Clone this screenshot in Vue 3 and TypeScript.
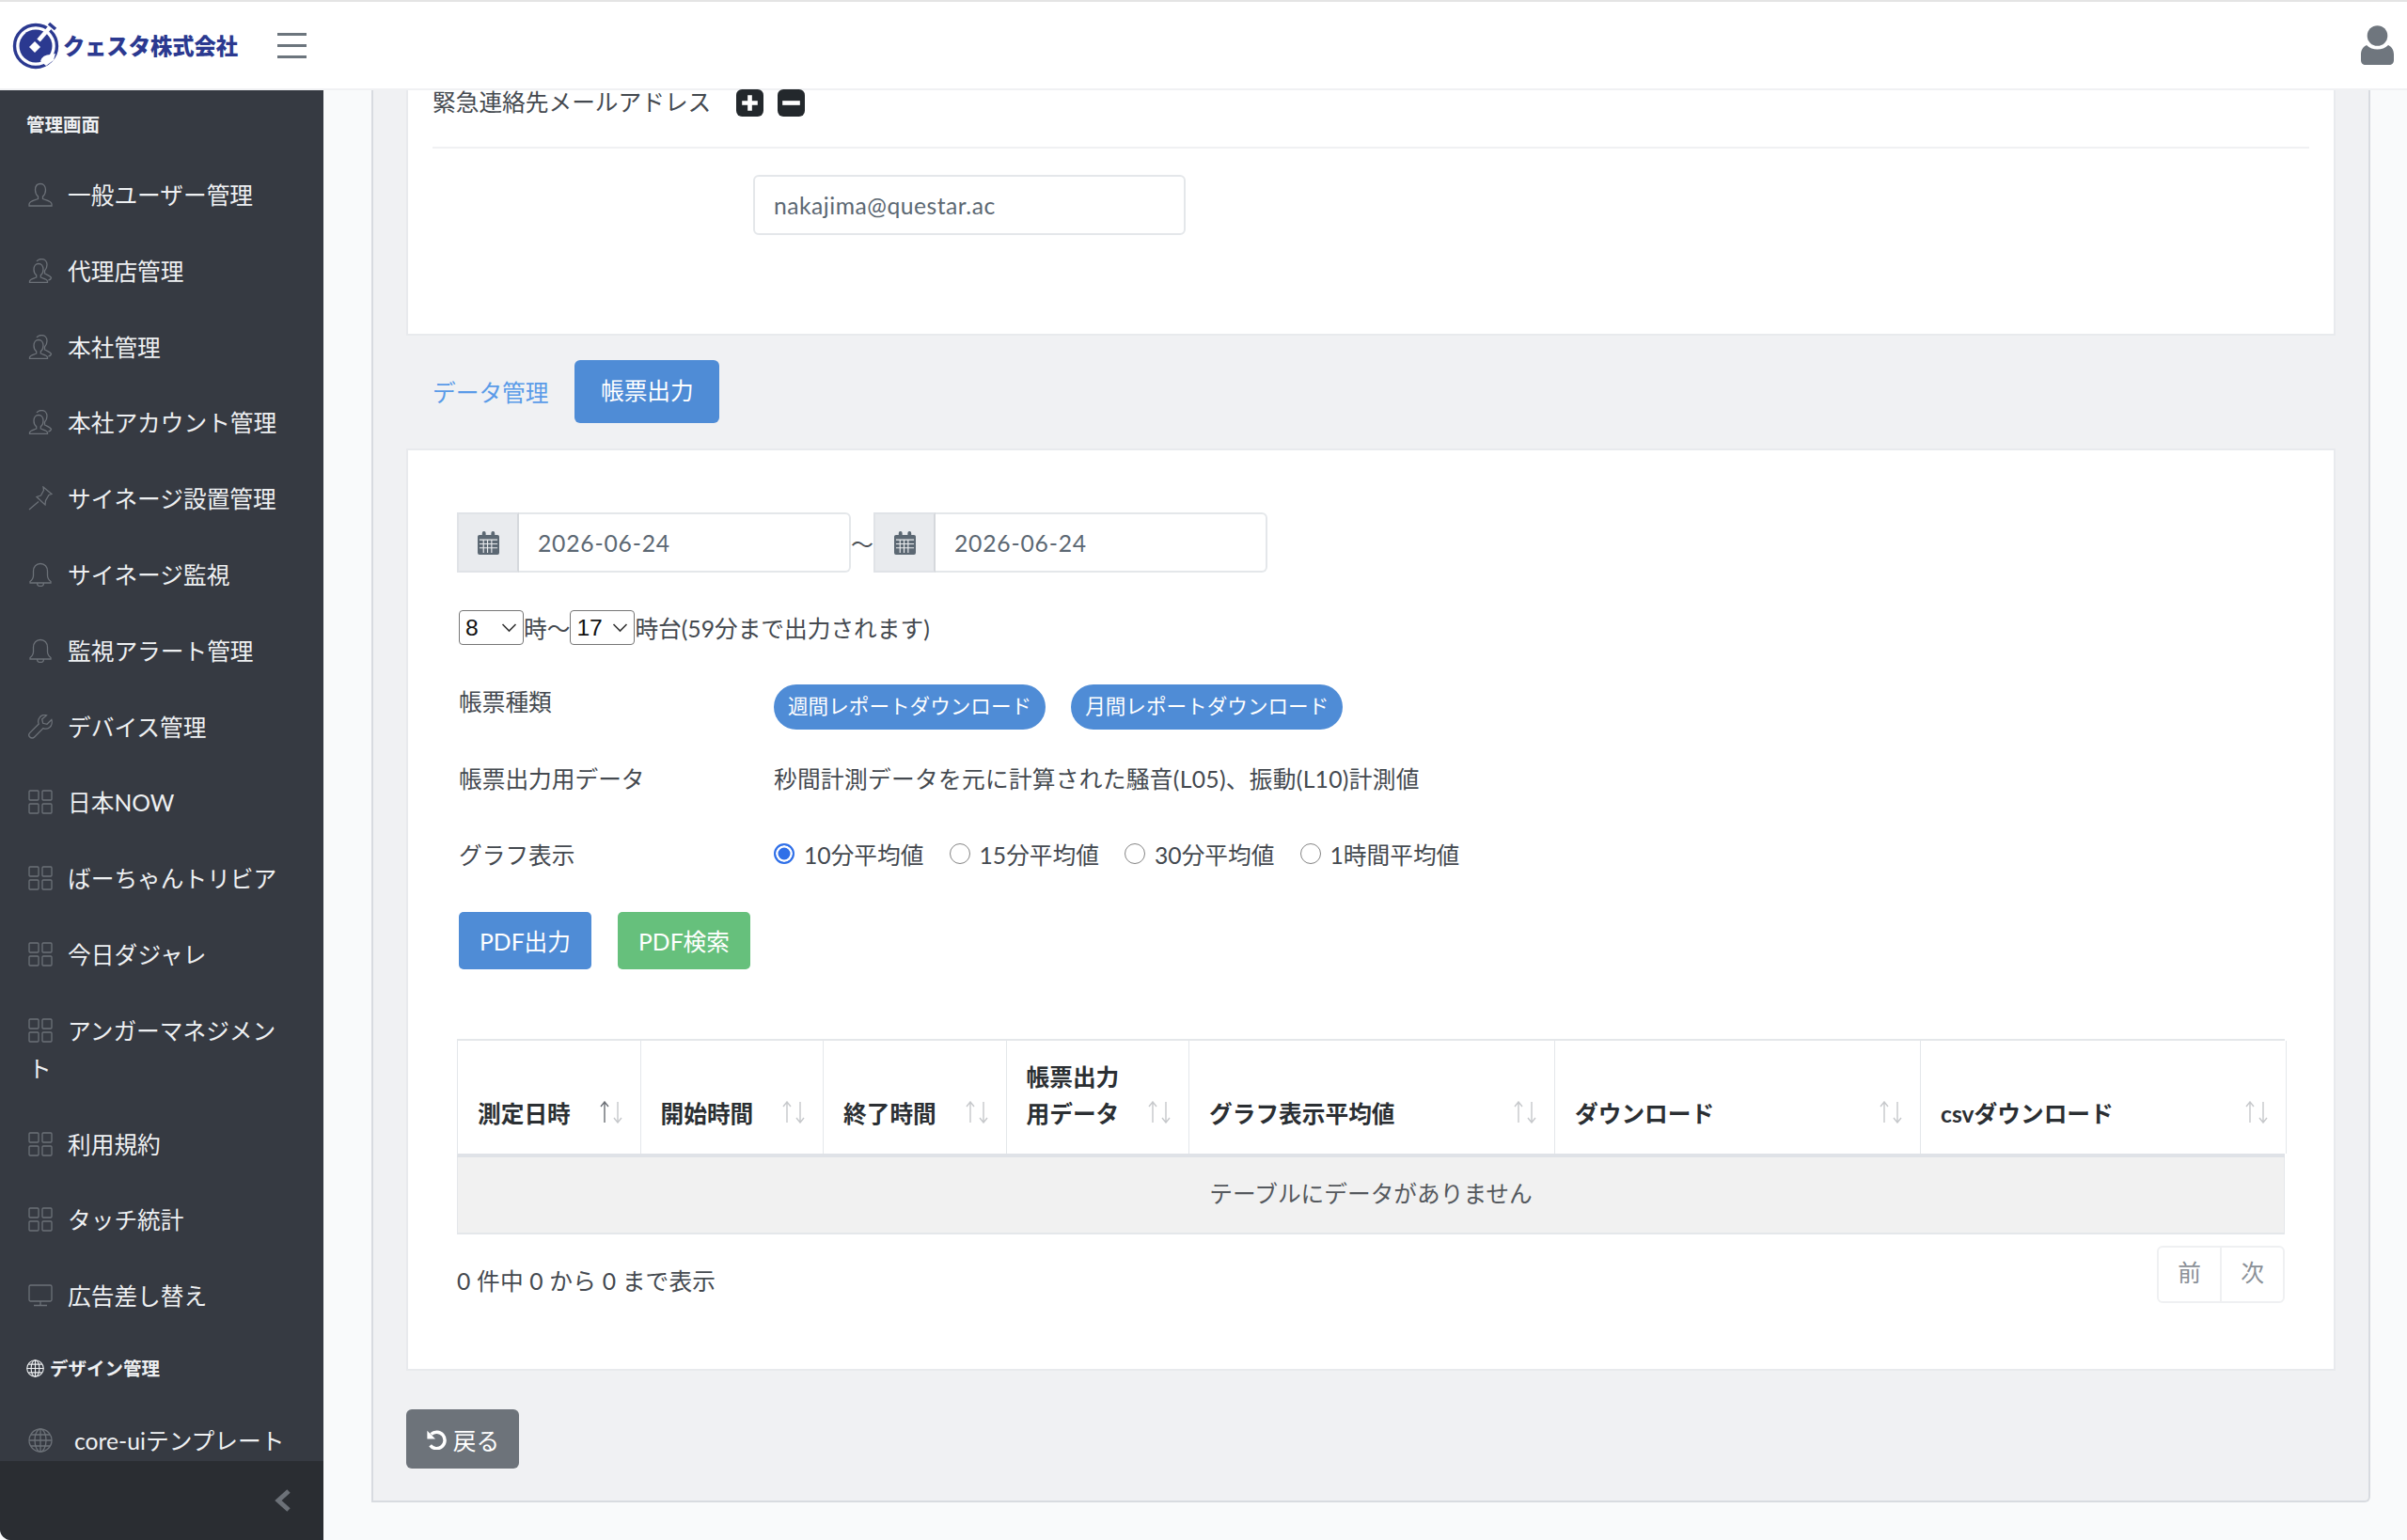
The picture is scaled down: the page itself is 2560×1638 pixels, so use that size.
<template>
  <div class="page">
    <header class="topbar">
      <div class="brand">
        <svg class="brand-mark" viewBox="0 0 50 52">
          <circle cx="25" cy="27" r="22.500" fill="#fff" stroke="#2b3990" stroke-width="3.400" />
          <circle cx="25" cy="27" r="17.500" fill="#2b3990" />
          <path d="M41 6 28 21" stroke="#fff" stroke-width="4.500" />
          <path d="m24 22 6 6-6 6-6-6z" fill="#fff" />
          <path d="M30 43q2-7 11-7l5-1-2 7-8 6z" fill="#fff" />
          <path d="m39 3 7 6" stroke="#2b3990" stroke-width="3.600" />
        </svg>
        <span class="brand-name">クェスタ株式会社</span>
      </div>
      <button class="burger" type="button" aria-label="menu"><i></i><i></i><i></i></button>
      <svg class="user-icon" viewBox="0 0 35 42">
        <circle cx="17.5" cy="11" r="10.8" fill="#6f767e" />
        <path d="M6 21c3 3 7 4.500 11.500 4.500S26 24 29 21c3.500 1.500 6 5 6 10v6c0 3-2 5-5 5H5c-3 0-5-2-5-5v-6c0-5 2.500-8.500 6-10z" fill="#6f767e" />
      </svg>
    </header>

    <div class="body-row">
      <aside class="sidebar">
        <nav class="side-nav">
          <div class="nav-title">管理画面</div>
          <a v-for="item in navItems" :key="item.label" class="nav-link">
            <svg class="nav-icon" viewBox="0 0 26 26" fill="none" stroke="currentColor" stroke-width="1.300">
              <template v-if="item.icon === 'user'">
                <path d="M13 1.500c-3.500 0-5.500 2.800-5.500 6.500 0 3 1.200 5.500 3 7v2.500c-3 1.500-9 2-9.500 5.500v2h24v-2c-.5-3.500-6.500-4-9.500-5.500V15c1.800-1.500 3-4 3-7 0-3.700-2-6.500-5.500-6.500z" />
              </template>
              <template v-else-if="item.icon === 'users'">
                <path d="M11 5.500c-3 0-5 2.500-5 6 0 2.700 1 5 2.700 6.300v2.200C6.500 21 2 21.500 1.500 24v1.500h19V24c-.5-2.500-5-3-7.200-4v-2.200c1.700-1.300 2.700-3.600 2.700-6.300 0-3.500-2-6-5-6z" />
                <path d="M9 3c1-1.500 3-2.500 5-2.500 3.500 0 6 2.500 6 6 0 3-1 5-2.500 6.500V16c2.500 1.200 6 2 7 4.500-.3 1.500-1.300 2.200-3 2.500" />
              </template>
              <template v-else-if="item.icon === 'pin'">
                <path d="M16 1l9 7.500-3 1-3.500 6-.5 4.500-9-8.500 4.500-1.500 3-5.500zM11 16.500 1 25" />
              </template>
              <template v-else-if="item.icon === 'bell'">
                <path d="M13 1.500c-4.500 0-7.500 3.500-7.500 8v4.500c0 2.500-1.500 5-3.500 6.500v1.500h22v-1.500c-2-1.500-3.500-4-3.500-6.500V9.500c0-4.500-3-8-7.500-8zM9.500 22c0 2 1.500 3.500 3.500 3.500s3.500-1.500 3.500-3.500" />
              </template>
              <template v-else-if="item.icon === 'wrench'">
                <path d="M24.800 5.500 20 10.300l-4.300-1-1-4.300L19.500.8c-3-.8-6 .2-7.500 2.500-1.500 2-1.700 4.500-.8 6.700L1.800 19.400c-1.300 1.300-1.300 3.300 0 4.600s3.500 1.300 4.800 0l9.400-9.400c2.200.9 4.700.7 6.700-.8 2.300-1.700 3-5.500 2.100-8.300z" />
              </template>
              <template v-else-if="item.icon === 'grid'">
                <rect x="1" y="1" width="10" height="10" rx="1" /><rect x="15" y="1" width="10" height="10" rx="1" />
                <rect x="1" y="15" width="10" height="10" rx="1" /><rect x="15" y="15" width="10" height="10" rx="1" />
              </template>
              <template v-else-if="item.icon === 'monitor'">
                <rect x="1" y="2" width="24" height="17" rx="1.500" /><path d="M13 19v4M6 23.500h14" />
              </template>
            </svg><span class="nav-text">{{ item.label }}</span>
          </a>
          <div class="nav-title nav-title-icon">
            <svg class="globe small" viewBox="0 0 26 26" fill="none" stroke="currentColor" stroke-width="1.500">
              <circle cx="13" cy="13" r="12" /><ellipse cx="13" cy="13" rx="6" ry="12" /><path d="M13 1v24M1 13h24M3 7h20M3 19h20" />
            </svg>
            デザイン管理
          </div>
          <a class="nav-link template-link">
            <svg class="nav-icon" viewBox="0 0 26 26" fill="none" stroke="currentColor" stroke-width="1.300">
              <circle cx="13" cy="13" r="12" /><ellipse cx="13" cy="13" rx="6" ry="12" /><path d="M13 1v24M1 13h24M3 7h20M3 19h20" />
            </svg><span class="nav-text">core-uiテンプレート</span>
          </a>
        </nav>
        <div class="minimizer">
          <svg viewBox="0 0 18 24" class="chevron"><path d="M15 2 4 12l11 10" fill="none" stroke="#6c7178" stroke-width="5" /></svg>
        </div>
      </aside>

      <main class="main">
        <div class="panel">
          <section class="card card-top">
            <div class="mail-head">
              <span class="mail-label">緊急連絡先メールアドレス</span>
              <svg class="square-btn" viewBox="0 0 28 28"><rect width="28" height="28" rx="6" fill="#23282c" /><path d="M14 6v16M6 14h16" stroke="#fff" stroke-width="4.500" /></svg>
              <svg class="square-btn" viewBox="0 0 28 28"><rect width="28" height="28" rx="6" fill="#23282c" /><path d="M5 14h18" stroke="#fff" stroke-width="4.500" /></svg>
            </div>
            <div class="mail-field"><input class="text-input" value="nakajima@questar.ac" readonly /></div>
          </section>

          <div class="tabs">
            <a class="tab">データ管理</a>
            <a class="tab tab-active">帳票出力</a>
          </div>

          <section class="card card-report">
            <div class="date-row">
              <div v-for="(d, i) in dates" :key="i" class="date-wrap">
                <span v-if="i === 1" class="tilde">～</span>
                <div class="date-group">
                  <span class="date-addon">
                    <svg viewBox="0 0 24 26" class="cal"><path d="M2 4h3V2a2 2 0 0 1 4 0v2h6V2a2 2 0 0 1 4 0v2h3a2 2 0 0 1 2 2v18a2 2 0 0 1-2 2H2a2 2 0 0 1-2-2V6a2 2 0 0 1 2-2z" fill="#5c6873" /><path d="M2 9.500h20M2 14h20M2 18.500h20M6.500 9v15M11 9v15M15.500 9v15" stroke="#e9ebee" stroke-width="1.200" /></svg>
                  </span>
                  <input class="date-input" :value="d" readonly />
                </div>
              </div>
            </div>

            <div class="time-row">
              <span class="hour-wrap">
                <select class="hour"><option>8</option></select>
                <svg class="hour-arrow" viewBox="0 0 16 10"><path d="m1 1 7 7 7-7" fill="none" stroke="#333" stroke-width="1.600" /></svg>
              </span>
              <span>時～</span>
              <span class="hour-wrap">
                <select class="hour"><option>17</option></select>
                <svg class="hour-arrow" viewBox="0 0 16 10"><path d="m1 1 7 7 7-7" fill="none" stroke="#333" stroke-width="1.600" /></svg>
              </span>
              <span>時台(59分まで出力されます)</span>
            </div>

            <div class="field-row row-type">
              <span class="field-label">帳票種類</span>
              <div class="pills">
                <a class="pill">週間レポートダウンロード</a>
                <a class="pill">月間レポートダウンロード</a>
              </div>
            </div>
            <div class="field-row row-data">
              <span class="field-label">帳票出力用データ</span>
              <span class="data-value">秒間計測データを元に計算された騒音(L05)、振動(L10)計測値</span>
            </div>
            <div class="field-row row-graph">
              <span class="field-label">グラフ表示</span>
              <div class="radios">
                <label v-for="(r, i) in averages" :key="r" class="radio">
                  <span class="dot" :class="{ on: i === 0 }"></span>{{ r }}
                </label>
              </div>
            </div>

            <div class="actions">
              <button class="btn btn-blue" type="button">PDF出力</button>
              <button class="btn btn-green" type="button">PDF検索</button>
            </div>

            <div class="table">
              <div class="thead">
                <div v-for="(col, i) in columns" :key="col.label" class="th" :class="{ wide: col.wide }">
                  <span class="th-text">{{ col.label }}</span>
                  <svg class="sort" viewBox="0 0 24 24" fill="none" stroke-width="1.400">
                    <path d="M5 23V1M1 6l4-5 4 5" :stroke="i === 0 ? '#6b6f75' : '#c6c8cb'" />
                    <path d="M19 1v22M15 18l4 5 4-5" stroke="#c6c8cb" />
                  </svg>
                </div>
              </div>
              <div class="empty">テーブルにデータがありません</div>
            </div>

            <div class="table-foot">
              <span class="info">0 件中 0 から 0 まで表示</span>
              <div class="pager"><a>前</a><a>次</a></div>
            </div>
          </section>

          <button class="btn-back" type="button">
            <svg viewBox="0 0 24 24" class="undo"><path d="M6 6a9.500 9.500 0 1 1-1 13" fill="none" stroke="#fff" stroke-width="3.800" /><path d="M1.500 2v9.500H11z" fill="#fff" /></svg>
            戻る
          </button>
        </div>
      </main>
    </div>
  </div>
</template>

<script setup lang="ts">
interface NavItem {
  label: string;
  icon: string;
}

const navItems: NavItem[] = [
  { label: '一般ユーザー管理', icon: 'user' },
  { label: '代理店管理', icon: 'users' },
  { label: '本社管理', icon: 'users' },
  { label: '本社アカウント管理', icon: 'users' },
  { label: 'サイネージ設置管理', icon: 'pin' },
  { label: 'サイネージ監視', icon: 'bell' },
  { label: '監視アラート管理', icon: 'bell' },
  { label: 'デバイス管理', icon: 'wrench' },
  { label: '日本NOW', icon: 'grid' },
  { label: 'ばーちゃんトリビア', icon: 'grid' },
  { label: '今日ダジャレ', icon: 'grid' },
  { label: 'アンガーマネジメント', icon: 'grid' },
  { label: '利用規約', icon: 'grid' },
  { label: 'タッチ統計', icon: 'grid' },
  { label: '広告差し替え', icon: 'monitor' },
];

const dates = ['2026-06-24', '2026-06-24'];
const averages = ['10分平均値', '15分平均値', '30分平均値', '1時間平均値'];

const columns = [
  { label: '測定日時', wide: false },
  { label: '開始時間', wide: false },
  { label: '終了時間', wide: false },
  { label: '帳票出力用データ', wide: false },
  { label: 'グラフ表示平均値', wide: true },
  { label: 'ダウンロード', wide: true },
  { label: 'csvダウンロード', wide: true },
];
</script>

<style>
html,
body {
  margin: 0;
  background: #f9fafb;
  overflow: hidden;
}
</style>

<style scoped>
.page {
  width: 2560px;
  height: 1638px;
  display: flex;
  flex-direction: column;
  overflow: hidden;
  font-family: Lato, "Noto Sans CJK JP", sans-serif;
  font-size: 24.7px;
  color: #4a4f55;
}

.topbar {
  height: 96px;
  flex: none;
  box-sizing: border-box;
  display: flex;
  align-items: center;
  padding-right: 14px;
  background: #fff;
  border-top: 2px solid #e4e4e4;
  border-bottom: 2px solid #f0f1f3;
}

.brand {
  width: 295px;
  display: flex;
  align-items: center;
  padding-left: 13px;
  box-sizing: border-box;
  gap: 4px;
}

.brand-mark {
  width: 50px;
  height: 52px;
  flex: none;
}

.brand-name {
  font-family: "Noto Sans CJK JP", sans-serif;
  font-weight: 900;
  font-size: 23.300px;
  color: #2b3990;
  white-space: nowrap;
}

.burger {
  width: 31px;
  padding: 0;
  border: 0;
  background: none;
  display: flex;
  flex-direction: column;
  gap: 9px;
}

.burger i {
  display: block;
  height: 3px;
  background: #6c757d;
}

.user-icon {
  width: 35px;
  height: 42px;
  margin-left: auto;
}

.body-row {
  flex: 1;
  min-height: 0;
  display: flex;
}

.sidebar {
  width: 344px;
  flex: none;
  display: flex;
  flex-direction: column;
  background: #363a42;
  color: #eef0f2;
  border-bottom-left-radius: 12px;
  overflow: hidden;
}

.side-nav {
  flex: 1;
  min-height: 0;
  overflow: hidden;
}

.nav-title {
  height: 72px;
  padding: 17px 0 0 28px;
  box-sizing: border-box;
  font-size: 19.500px;
  font-weight: 700;
  line-height: 40px;
  white-space: nowrap;
}

.nav-title-icon {
  display: flex;
  align-items: flex-start;
  gap: 6px;
  height: 73px;
  padding-top: 16px;
}

.globe.small {
  width: 19px;
  height: 19px;
  margin-top: 10px;
  flex: none;
}

.nav-link {
  display: block;
  padding: 20px 40px 20.800px 30px;
  line-height: 40px;
  white-space: normal;
}

.nav-icon {
  width: 26px;
  height: 26px;
  margin-right: 16px;
  vertical-align: -3px;
  color: #6c7178;
}

.template-link .nav-icon {
  margin-right: 23px;
}

.template-link {
  padding-right: 0;
  white-space: nowrap;
}

.minimizer {
  height: 84px;
  flex: none;
  display: flex;
  align-items: center;
  justify-content: flex-end;
  padding-right: 34px;
  background: #2a2d32;
}

.chevron {
  width: 18px;
  height: 24px;
}

.main {
  flex: 1;
  min-width: 0;
  padding: 0 40px 40px 51px;
  display: flex;
}

.panel {
  flex: 1;
  padding: 0 35px;
  background: #f0f1f3;
  border: solid #d8dbe0;
  border-width: 0 2px 2px 2px;
  border-bottom-right-radius: 6px;
  box-sizing: border-box;
}

.card {
  background: #fff;
  border: 2px solid #e8eaed;
  box-sizing: border-box;
}

.card-top {
  height: 261px;
  padding: 0 26px;
  border-top: 0;
}

.mail-head {
  display: flex;
  align-items: center;
  height: 62px;
  margin-bottom: 28px;
  border-bottom: 2px solid #f0f1f3;
  padding-bottom: 38px;
  box-sizing: border-box;
}

.mail-label {
  margin-right: 27px;
  color: #44494f;
  white-space: nowrap;
}

.square-btn {
  width: 29px;
  height: 29px;
  margin-right: 15px;
  margin-top: 4px;
  flex: none;
}

.mail-field {
  padding-left: 341px;
}

.text-input,
.date-input {
  box-sizing: border-box;
  font: inherit;
  color: #5c6873;
  border: 2px solid #e4e7ea;
  background: #fff;
  outline: none;
}

.text-input {
  width: 460px;
  height: 64px;
  padding: 0 20px;
  border-radius: 6px;
  letter-spacing: 0.5px;
}

.tabs {
  height: 120px;
  display: flex;
  align-items: center;
  padding: 0 0 1px 28px;
  box-sizing: border-box;
  gap: 28px;
}

.tab {
  color: #5a9be8;
  margin-top: -2px;
}

.tab-active {
  margin-top: 0;
  padding: 0 27.500px;
  height: 67px;
  line-height: 65px;
  color: #fff;
  background: #4f8cd6;
  border-radius: 6px;
}

.card-report {
  height: 981px;
  padding: 66px 52px 0;
}

.date-row {
  display: flex;
  height: 64px;
}

.date-wrap {
  display: flex;
  align-items: center;
}

.tilde {
  width: 24px;
  font-size: 24px;
  white-space: nowrap;
  display: flex;
  justify-content: center;
}

.date-group {
  display: flex;
  width: 419px;
  height: 64px;
}

.date-addon {
  width: 66px;
  flex: none;
  display: flex;
  align-items: center;
  justify-content: center;
  box-sizing: border-box;
  background: #e9ebee;
  border: 2px solid #e0e3e7;
  border-right-color: #d5d8dc;
}

.cal {
  width: 23px;
  height: 25px;
}

.date-input {
  flex: 1;
  min-width: 0;
  padding: 0 20px;
  border-left: 0;
  border-radius: 0 6px 6px 0;
  letter-spacing: 0.8px;
}

.time-row {
  display: flex;
  align-items: center;
  height: 38px;
  margin-top: 39px;
  padding-left: 2px;
  color: #44494f;
  white-space: nowrap;
}

.hour-wrap {
  position: relative;
  display: block;
  height: 37px;
}

.hour {
  appearance: none;
  display: block;
  width: 69px;
  height: 37px;
  font: inherit;
  font-family: "Liberation Sans", sans-serif;
  color: #111;
  padding: 0 0 0 6px;
  background: #fff;
  border: 1.500px solid #767676;
  border-radius: 4px;
}

.hour-arrow {
  position: absolute;
  right: 7px;
  top: 14px;
  width: 17px;
  height: 10px;
}

.field-row {
  display: flex;
  align-items: center;
  color: #44494f;
}

.field-label {
  width: 337px;
  padding-left: 2px;
  flex: none;
  box-sizing: border-box;
}

.row-type {
  margin-top: 40px;
  height: 52px;
}

.row-type .field-label {
  margin-top: -14px;
}

.row-data {
  margin-top: 29px;
  height: 40px;
}

.data-value {
  letter-spacing: 0.3px;
}

.row-graph {
  margin-top: 41px;
  height: 40px;
}

.pills {
  display: flex;
  gap: 27px;
}

.pill {
  height: 48px;
  line-height: 46px;
  padding: 0 15px;
  font-size: 21.600px;
  color: #fff;
  background: #4f8cd6;
  border-radius: 24px;
  white-space: nowrap;
}

.radios {
  display: flex;
}

.radio {
  width: 186.500px;
  display: flex;
  align-items: center;
  white-space: nowrap;
}

.dot {
  width: 22px;
  height: 22px;
  margin-right: 10px;
  box-sizing: border-box;
  border: 1.500px solid #858585;
  border-radius: 50%;
  background: #fff;
}

.dot.on {
  border: 2px solid #2f6fe8;
  background: #2f6fe8;
  box-shadow: inset 0 0 0 2.500px #fff;
}

.actions {
  display: flex;
  gap: 28px;
  margin-top: 42px;
  padding-left: 2px;
}

.btn {
  height: 61px;
  width: 141px;
  padding: 0 0 2px;
  border: 0;
  border-radius: 5px;
  font: inherit;
  color: #fff;
}

.btn-blue {
  background: #4f8cd6;
}

.btn-green {
  background: #66c07c;
}

.table {
  margin-top: 74px;
  width: 1944px;
  box-sizing: border-box;
}

.thead {
  display: flex;
  height: 126px;
  box-sizing: border-box;
  border-top: 2px solid #e4e7ea;
  border-left: 1px solid #e4e7ea;
  border-bottom: 4px solid #dfe2e7;
}

.th {
  width: 194.500px;
  flex: none;
  position: relative;
  display: flex;
  align-items: flex-end;
  box-sizing: border-box;
  padding: 0 70px 23px 21px;
  border-right: 1px solid #e4e7ea;
  font-weight: 700;
  line-height: 39px;
  color: #2b2f33;
}

.th.wide {
  width: 389px;
}

.sort {
  position: absolute;
  right: 19px;
  bottom: 32px;
  width: 24px;
  height: 24px;
}

.empty {
  height: 82px;
  line-height: 78px;
  text-align: center;
  background: #f1f1f1;
  border: 1px solid #e4e7ea;
  border-top: 0;
  border-bottom-width: 2px;
  box-sizing: border-box;
  color: #55595e;
}

.table-foot {
  display: flex;
  justify-content: space-between;
  margin-top: 12px;
  width: 1944px;
}

.info {
  margin-top: 18px;
  color: #44494f;
  letter-spacing: 0.2px;
}

.pager {
  display: flex;
  height: 61px;
  box-sizing: border-box;
  border: 2px solid #eff0f2;
  border-radius: 6px;
  color: #8a9097;
}

.pager a {
  width: 65px;
  text-align: center;
  line-height: 54px;
}

.pager a + a {
  border-left: 2px solid #eff0f2;
}

.btn-back {
  margin-top: 41px;
  width: 120px;
  height: 63px;
  padding: 0;
  display: flex;
  align-items: center;
  justify-content: center;
  gap: 7px;
  border: 0;
  border-radius: 6px;
  background: #6d737a;
  color: #fff;
  font: inherit;
}

.undo {
  width: 22px;
  height: 22px;
}
</style>
